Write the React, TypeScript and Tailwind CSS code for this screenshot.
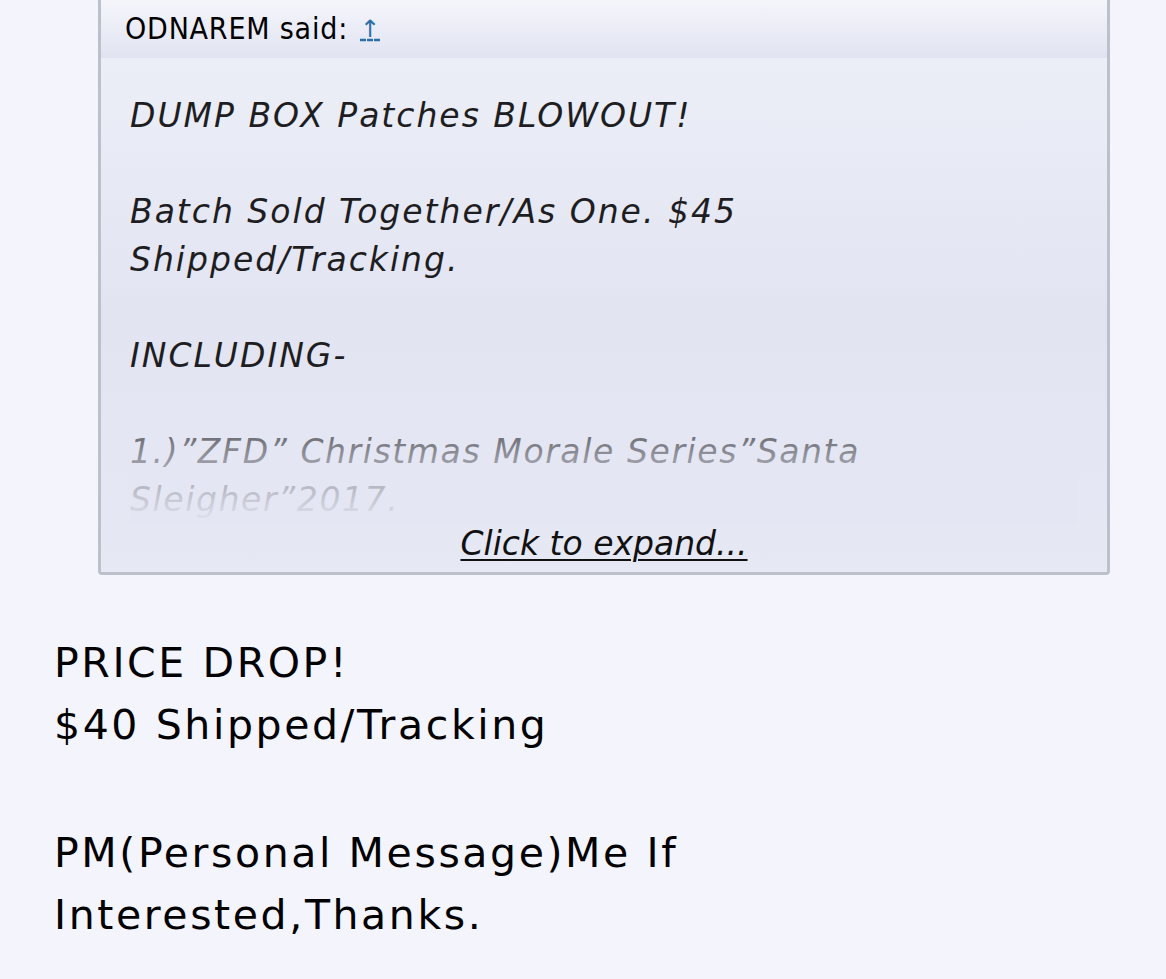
import React from "react";

export default function App() {
  return (
    <div className="min-h-[979px] w-[1166px] overflow-hidden bg-[#f4f4fd] text-black" style={{ fontFamily: '"DejaVu Sans", Verdana, sans-serif' }}>
      <div className="pl-[98px] pr-[56px]">
        <div className="-mt-[4px] rounded-b-[4px] border-x-[3px] border-b-[3px] border-[#bcc0ca] bg-[#e6e8f4]">
          <div className="flex h-[63px] items-center bg-gradient-to-b from-[#f6f7fc] to-[#e1e3f1] pl-[24px] pt-[4px] border-b border-[#eceef6]">
            <span className="text-[30px] leading-none tracking-[0.8px]" style={{ fontFamily: '"DejaVu Sans Condensed", "Noto Sans", sans-serif' }}>
              ODNAREM said:
            </span>
            <span className="ml-[12px] text-[24px] leading-none text-[#2a6fa8] underline decoration-dashed">↑</span>
          </div>
          <div className="relative bg-gradient-to-b from-[#eceef7] via-[#e2e4f2] to-[#e6e8f4] px-[29px] pt-[33px] pb-[10px]">
            <div className="relative h-[432px] overflow-hidden text-[33px] leading-[48px] italic tracking-[2px] text-[#1e1e22]">
              <p>DUMP BOX Patches BLOWOUT!</p>
              <p>&nbsp;</p>
              <p>Batch Sold Together/As One. $45<br />Shipped/Tracking.</p>
              <p>&nbsp;</p>
              <p>INCLUDING-</p>
              <p>&nbsp;</p>
              <p className="tracking-[1.6px]">1.)”ZFD” Christmas Morale Series”Santa<br />Sleigher”2017.</p>
              <div className="pointer-events-none absolute inset-x-0 top-[300px] h-[132px] bg-gradient-to-b from-[#e4e6f3]/0 via-[#e4e6f3]/60 to-[#e4e6f3]" />
            </div>
            <div className="mt-[2px] text-center text-[33px] leading-[36px] italic tracking-[0px] text-[#111]">
              <span className="underline underline-offset-[4px] decoration-[2px]">Click to expand...</span>
            </div>
          </div>
        </div>
      </div>
      <div className="mt-[57px] pl-[54px] text-[41px] leading-[62px] tracking-[2.6px] text-black">
        <p>PRICE DROP!<br />$40 Shipped/Tracking</p>
        <p className="h-[66px]">&nbsp;</p>
        <p>PM(Personal Message)Me If<br />Interested,Thanks.</p>
      </div>
    </div>
  );
}
